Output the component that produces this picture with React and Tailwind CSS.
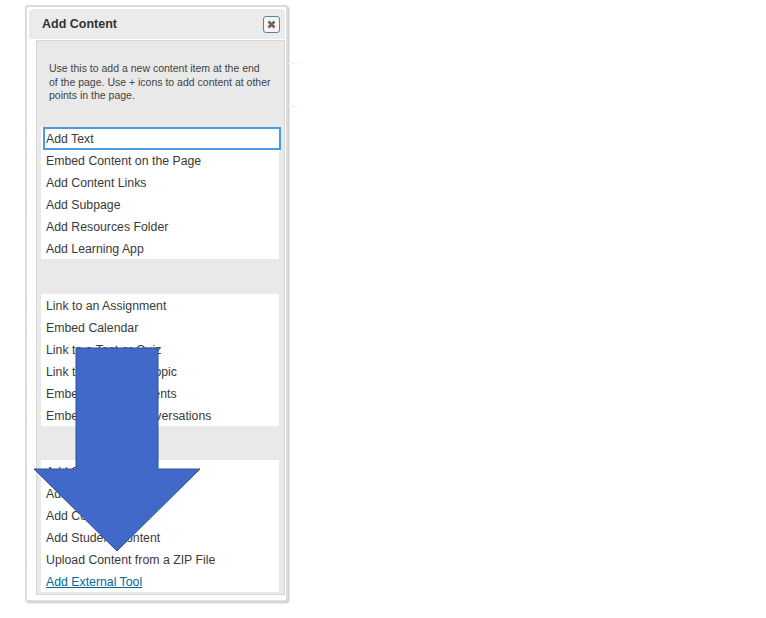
const firstList = [
  "Embed Content on the Page",
  "Add Content Links",
  "Add Subpage",
  "Add Resources Folder",
  "Add Learning App",
];

const secondList = [
  "Link to an Assignment",
  "Embed Calendar",
  "Link to a Test or Quiz",
  "Link to Discussion Topic",
  "Embed Announcements",
  "Embed Current Conversations",
];

const thirdList = [
  "Add Survey",
  "Add Image Gallery",
  "Add Content Portal",
  "Add Student Content",
  "Upload Content from a ZIP File",
];

function Row({ children }) {
  return <div className="h-[22px] pl-[5px] leading-[24px] text-[12.3px] text-[#3a3a3a]">{children}</div>;
}

export default function App() {
  return (
    <div className="relative h-[618px] w-[766px] overflow-hidden bg-white font-['Liberation_Sans',Arial,sans-serif]">
      <div className="absolute left-[288px] top-[63px] h-px w-[10px] bg-[#f0f0f0]" />
      <div className="absolute left-[288px] top-[106px] h-px w-[10px] bg-[#f0f0f0]" />

      <div className="ml-[25px] mt-[5px] inline-block h-[597px] w-[263px] rounded-[3px] border-2 border-[#dcdcdc] bg-white pl-[2px] pt-[2px] shadow-[1px_1px_2px_rgba(0,0,0,0.25)]">
        <div className="flex h-[30px] w-[256px] items-center justify-between rounded-t-[4px] bg-[#ebebeb] pl-[13px] pr-[5px]">
          <span className="text-[12.5px] font-bold text-[#333333]">Add Content</span>
          <button className="flex h-[17px] w-[17px] items-center justify-center rounded-[3px] border-[1.5px] border-[#4d87ab] bg-[#f5f5f5]">
            <svg width="9" height="9" viewBox="0 0 9 9">
              <path d="M1.5 1.5 L7.5 7.5 M7.5 1.5 L1.5 7.5" stroke="#666666" strokeWidth="2.6" />
            </svg>
          </button>
        </div>

        <div className="ml-[7px] mt-px h-[555px] w-[249px] border border-[#d8d8d8] bg-[#e9e9e9] pl-[4px]">
          <p className="whitespace-nowrap pb-[24px] pl-[8px] pt-[21px] text-[10.5px] leading-[13.5px] text-[#444444]">
            Use this to add a new content item at the end
            <br />
            of the page. Use + icons to add content at other
            <br />
            points in the page.
          </p>

          <div className="w-[238px] bg-white">
            <div className="relative mb-[-1px] ml-[2px] h-[23px] w-[238px] border-2 border-[#4a9ae0] pl-px text-[12.3px] leading-[21px] text-[#3a3a3a]">Add Text</div>
            {firstList.map((item) => (
              <Row key={item}>{item}</Row>
            ))}
          </div>

          <div className="mt-[35px] w-[238px] bg-white">
            {secondList.map((item) => (
              <Row key={item}>{item}</Row>
            ))}
          </div>

          <div className="mt-[34px] w-[238px] bg-white">
            {thirdList.map((item) => (
              <Row key={item}>{item}</Row>
            ))}
            <Row>
              <a href="#" className="text-[#00689c] underline">Add External Tool</a>
            </Row>
          </div>
        </div>
      </div>

      <svg className="absolute left-0 top-0" width="766" height="618">
        <polygon
          points="76,348 158,348 158,469 200,469 117,551 34,469 76,469"
          fill="#4069c9"
          stroke="#2f528f"
          strokeWidth="1"
        />
      </svg>
    </div>
  );
}
